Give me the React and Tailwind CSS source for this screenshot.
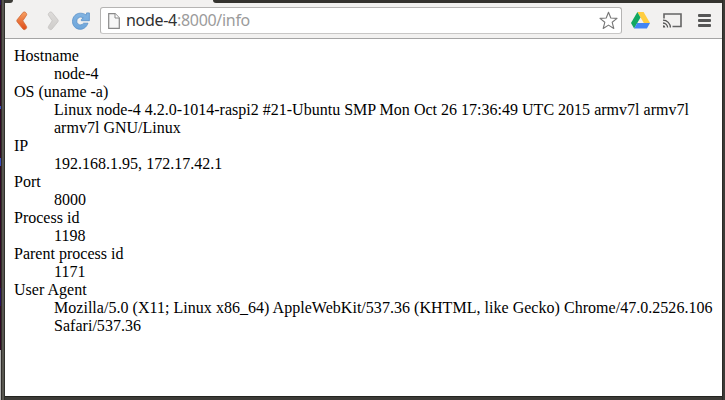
const entries = [
  ["Hostname", ["node-4"]],
  ["OS (uname -a)", ["Linux node-4 4.2.0-1014-raspi2 #21-Ubuntu SMP Mon Oct 26 17:36:49 UTC 2015 armv7l armv7l", "armv7l GNU/Linux"]],
  ["IP", ["192.168.1.95, 172.17.42.1"]],
  ["Port", ["8000"]],
  ["Process id", ["1198"]],
  ["Parent process id", ["1171"]],
  ["User Agent", ["Mozilla/5.0 (X11; Linux x86_64) AppleWebKit/537.36 (KHTML, like Gecko) Chrome/47.0.2526.106", "Safari/537.36"]],
];

function Chevron({ flip, from, to, stroke, id }) {
  return (
    <svg width="12" height="20" viewBox="0 0 12 20" className={flip ? "-scale-x-100" : ""}>
      <defs>
        <linearGradient id={id} x1="0" y1="0" x2="0" y2="1">
          <stop offset="0" stopColor={from} />
          <stop offset="1" stopColor={to} />
        </linearGradient>
      </defs>
      <path d="M7.2 1.3 L1.1 8.8 Q.4 9.8 1.1 10.8 L7.2 18.3 Q8.2 19 9.4 18.3 L10.4 17.2 Q11 16.3 10.5 15.4 L6.8 9.8 L10.5 4.2 Q11 3.3 10.4 2.4 L9.4 1.3 Q8.2 .6 7.2 1.3Z" fill={`url(#${id})`} stroke={stroke} strokeWidth=".8" />
    </svg>
  );
}

function Reload() {
  return (
    <svg width="18" height="18" viewBox="0 0 18 18">
      <defs>
        <linearGradient id="reload" x1="0" y1="0" x2="0" y2="1">
          <stop offset="0" stopColor="#82b4e2" />
          <stop offset="1" stopColor="#6fa6da" />
        </linearGradient>
      </defs>
      <path d="M17.4 .9 V8.7 H9.3 V7.5 L11.3 5.9 C9.7 4.8 7.4 4.8 6 6.2 C4.4 7.8 4.4 10.4 5.9 11.9 C7.6 13.5 10.2 13.1 11.6 11.2 H16 C14.6 15.2 11.2 17.5 7.9 17.3 C3.5 17 .5 13.6 .5 9.4 C.5 4.6 4 1.2 8.4 1.2 C10.8 1.2 12.8 2 14.2 3.1 L14.6 .9Z" fill="url(#reload)" stroke="#5b90c8" strokeWidth=".8" strokeLinejoin="round" />
    </svg>
  );
}

function Toolbar() {
  return (
    <div className="flex h-[36px] shrink-0 items-center border-b border-[#a5a5a5] bg-[#f2f1f0] pl-[11px] pr-[10px]">
      <Chevron id="back" from="#f7a163" to="#df4b18" stroke="#cf6a36" />
      <div className="ml-[19px] flex"><Chevron id="forward" flip from="#dddbd9" to="#cfcdcb" stroke="#c5c3c1" /></div>
      <div className="ml-[13px] flex"><Reload /></div>
      <div className="ml-[10px] flex h-[27px] w-[522px] items-center rounded-[3px] border border-[#b5b4b3] border-b-[#c8c7c6] bg-white pl-[7px] pr-[3px]">
        <svg width="12" height="16" viewBox="0 0 12 16">
          <path d="M.7 .7 H7 L11.3 5 V15.3 H.7Z" fill="#f7f7f7" stroke="#898989" strokeWidth="1.2" />
          <path d="M7 .7 V5 H11.3" fill="#fff" stroke="#898989" />
        </svg>
        <span className="-mt-[2px] ml-[6px] whitespace-nowrap font-['Noto_Sans',sans-serif] text-[16px] leading-[24px] tracking-[-0.3px] text-[#9b9b9b]">
          <span className="text-[#303030]">node-4</span>:8000/info
        </span>
        <svg className="ml-auto" width="19" height="19" viewBox="0 0 19 19">
          <path d="M9.5 1.2 L11.8 7 L18 7.4 L13.2 11.3 L14.8 17.5 L9.5 14.1 L4.2 17.5 L5.8 11.3 L1 7.4 L7.2 7Z" fill="#fff" stroke="#777" strokeWidth="1.1" strokeLinejoin="round" />
        </svg>
      </div>
      <svg className="ml-[9px]" width="19" height="17" viewBox="0 0 19 17">
        <path d="M6.4 0 H12.6 L19 11 H12.8Z" fill="#ffcd40" />
        <path d="M6.4 0 L0 11 L3.1 16.6 L9.5 5.4Z" fill="#11a861" />
        <path d="M6.2 11 H19 L15.9 16.6 H3.1Z" fill="#4285f4" />
      </svg>
      <svg className="ml-[13px]" width="19" height="15" viewBox="0 0 19 15">
        <path d="M1 5.5 V1 H18 V13.5 H9.5" fill="none" stroke="#646464" strokeWidth="1.6" />
        <path d="M0 7.2 A7.4 7.4 0 0 1 7.4 14.6 M0 10 A4.6 4.6 0 0 1 4.6 14.6" fill="none" stroke="#555" strokeWidth="1.3" />
        <path d="M0 12.3 A2.3 2.3 0 0 1 2.3 14.6 H0Z" fill="#555" />
      </svg>
      <div className="ml-[16px] flex flex-col gap-[2px]">
        <div className="h-[3px] w-[13px] rounded-[1px] bg-[#555]" />
        <div className="h-[3px] w-[13px] rounded-[1px] bg-[#555]" />
        <div className="h-[3px] w-[13px] rounded-[1px] bg-[#555]" />
      </div>
    </div>
  );
}

export default function App() {
  return (
    <div className="flex h-[400px] w-[725px] overflow-hidden bg-[#3c3b37]">
      <div className="flex w-px flex-col bg-[#300a24]">
        <div className="h-[5px] bg-[#2c1450]" />
        <div className="mt-[101px] h-[3px] bg-[#3b4cba]" />
        <div className="mt-[49px] h-[8px] bg-[#3b4cba]" />
        <div className="mt-[122px] h-[18px] bg-[#281058]" />
        <div className="mt-auto h-[50px] bg-[#b5b5b5]" />
      </div>
      <div className="w-px bg-[#302d2a]" />
      <div className="w-[2px] bg-[#57564f]" />
      <div className="w-px bg-[#30302c]" />
      <div className="flex w-[717px] flex-col">
        <div className="flex h-[3px] shrink-0 bg-[#f2f1f0]">
          <div className="h-[3px] w-[8px] rounded-br-[4px] bg-[#3c3b37]" />
          <div className="ml-[200px] h-[3px] flex-1 rounded-bl-[3px] bg-[#34332f]" />
        </div>
        <Toolbar />
        <dl className="h-[357px] bg-white pl-[9px] pt-[8px] font-['Liberation_Serif',serif] text-[16px] leading-[18px] tracking-[0.01px] text-black">
          {entries.map(([term, lines]) => (
            <div key={term} className="last:tracking-[0.03px]">
              <dt>{term}</dt>
              {lines.map((line) => <dd key={line} className="ml-[40px] whitespace-nowrap">{line}</dd>)}
            </div>
          ))}
        </dl>
        <div className="h-px bg-[#23231f]" />
      </div>
      <div className="w-px bg-[#2a2a26]" />
    </div>
  );
}
